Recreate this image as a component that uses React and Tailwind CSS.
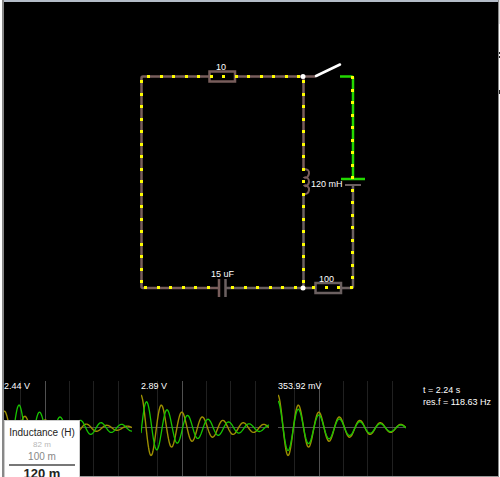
const SCOPES = [
  { label: "2.44 V", yellow: { amp: 17, lag: 0.5 }, green: { amp: 30, lag: 15.2 } },
  { label: "2.89 V", yellow: { amp: 33, lag: 0 }, green: { amp: 29, lag: 5.7 } },
  { label: "353.92 mV", yellow: { amp: 33, lag: 0 }, green: { amp: 27, lag: 0 } },
];

const PERIOD = 20.5;
const DECAY = 56;
const SCOPE_WIDTH = 128;
const MID = 47;

const OPTIONS = [
  { label: "82 m", className: "text-[8px] leading-[10px] text-[#b8b8b8]" },
  { label: "100 m", className: "text-[10px] leading-[14px] text-[#888888]" },
  { label: "120 m", className: "border-t-2 border-[#777777] text-[13px] leading-4 font-bold text-[#222222]" },
];

function wavePoints({ amp, lag }) {
  const points = [];
  for (let t = 0; t <= SCOPE_WIDTH; t += 0.5) {
    const y = MID - amp * Math.exp(-t / DECAY) * Math.cos((2 * Math.PI * (t - lag)) / PERIOD);
    points.push(`${t},${y.toFixed(2)}`);
  }
  return points.join(" ");
}

// Charge dots, evenly spaced along one straight piece of wire
function Dots({ x, y, count, vertical = false }) {
  return Array.from({ length: count }, (_, i) => (
    <rect
      key={i}
      x={Math.round(vertical ? x : x + i * 12.5) - 1}
      y={Math.round(vertical ? y + i * 12.5 : y) - 1}
      width="3"
      height="3"
      fill="#ffff00"
    />
  ));
}

function Circuit() {
  return (
    <svg viewBox="4 3 494 378" className="block h-auto w-full" role="img" aria-label="LC circuit">
      <g fill="none" stroke="#785d5b" strokeWidth="2.5">
        <path d="M209 76.5H143Q141.5 76.5 141.5 78V286.5Q141.5 288 143 288H219" />
        <path d="M235 76.5H316" />
        <rect x="209.5" y="71.5" width="25.5" height="10" />
        <path d="M219 279V297" />
        <path d="M303.5 76.5V169" />
        <path
          strokeWidth="2"
          d="M303.5 169.5C307 168.5 309.5 170.5 309 173.5C308.5 177 306 178.5 304.5 177.5C306 176.5 309.5 178.5 309 182C308.5 185.5 306 187 304.5 185.5C306 184.5 309.5 187 309 190C308.5 193.5 306 194.5 303.5 194"
        />
      </g>
      <g fill="none" stroke="#6b6060" strokeWidth="2.5">
        <path d="M225.5 279V297" />
        <path d="M226 288H315" />
        <path d="M303.5 194V288" />
        <rect x="315.5" y="283" width="25.5" height="10" />
        <path d="M341 288H351.5Q353 288 353 286.5V185" />
        <path strokeWidth="2" d="M345 185H361" />
      </g>
      <path d="M340 76.5H351.5Q353 76.5 353 78V179" fill="none" stroke="#22d800" strokeWidth="2.5" />
      <path d="M341 179H365" stroke="#22d800" strokeWidth="2.5" />
      <path d="M316 76L340 64.5" stroke="#ffffff" strokeWidth="2.5" strokeLinecap="round" />

      <g shapeRendering="crispEdges">
        <Dots x={148} y={76} count={13} />
        <Dots x={141} y={81} count={17} vertical />
        <Dots x={145} y={287} count={6} />
        <Dots x={232} y={287} count={6} />
        <Dots x={303} y={81} count={17} vertical />
        <Dots x={352} y={77} count={17} vertical />
        <Dots x={313} y={287} count={4} />
      </g>
      <circle cx="303" cy="76.5" r="2.5" fill="#ffffff" />
      <circle cx="303" cy="288" r="2.5" fill="#ffffff" />

      <g className="fill-white text-[9px]">
        <text x="216" y="70">10</text>
        <text x="211" y="277">15 uF</text>
        <text x="311" y="187">120 mH</text>
        <text x="319" y="282">100</text>
      </g>
    </svg>
  );
}

function Scope({ label, yellow, green }) {
  return (
    <svg viewBox="0 0 128 95" className="block w-32 shrink-0" role="img" aria-label={label}>
      <g stroke="#202020" strokeWidth="1">
        <path d="M16.5 0V95M65.5 0V95M89.5 0V95M114.5 0V95" />
        <path d="M41.5 0V95" stroke="#505050" />
        <path d="M0 46.5H128" stroke="#505050" />
      </g>
      <polyline points={wavePoints(yellow)} fill="none" stroke="#9c8f00" strokeWidth="1.4" />
      <polyline points={wavePoints(green)} fill="none" stroke="#18c400" strokeWidth="1.3" />
      <text x="0" y="8" className="fill-white text-[9px]">{label}</text>
    </svg>
  );
}

function InductancePicker() {
  return (
    <div className="absolute bottom-0 left-0 h-[57px] w-19 overflow-hidden border border-b-0 border-[#cccccc] bg-white px-1 pt-[5px] text-center">
      <h2 className="text-[10px] leading-[14px] whitespace-nowrap text-[#222222]">Inductance (H)</h2>
      {OPTIONS.map((option) => (
        <button key={option.label} className={`block w-full ${option.className}`}>
          {option.label}
        </button>
      ))}
    </div>
  );
}

export default function App() {
  return (
    <div className="flex min-h-screen overflow-hidden bg-white font-['Liberation_Sans',Arial,sans-serif]">
      <div className="w-1 shrink-0 border-r-2 border-[#888888]" />
      <main className="relative flex-1 border-t-2 border-[#b4bcc8]">
        <div className="border-b border-[#999999] bg-black pt-px">
          <Circuit />
          <div className="flex gap-[9px]">
            {SCOPES.map((scope) => (
              <Scope key={scope.label} {...scope} />
            ))}
            <div className="ml-2 pt-[3px] text-[9px] leading-3 whitespace-nowrap text-white">
              <p>t = 2.24 s</p>
              <p>res.f = 118.63 Hz</p>
            </div>
          </div>
        </div>
        <InductancePicker />
      </main>
      <div className="flex w-[2px] shrink-0 flex-col border-l border-[#888888]">
        <div className="h-6 bg-[#dddddd]" />
        <div className="mt-7 h-[2px] bg-[#222222]" />
        <div className="mt-[2px] h-[2px] bg-[#222222]" />
        <div className="mt-8 h-1 bg-[#222222]" />
      </div>
    </div>
  );
}
